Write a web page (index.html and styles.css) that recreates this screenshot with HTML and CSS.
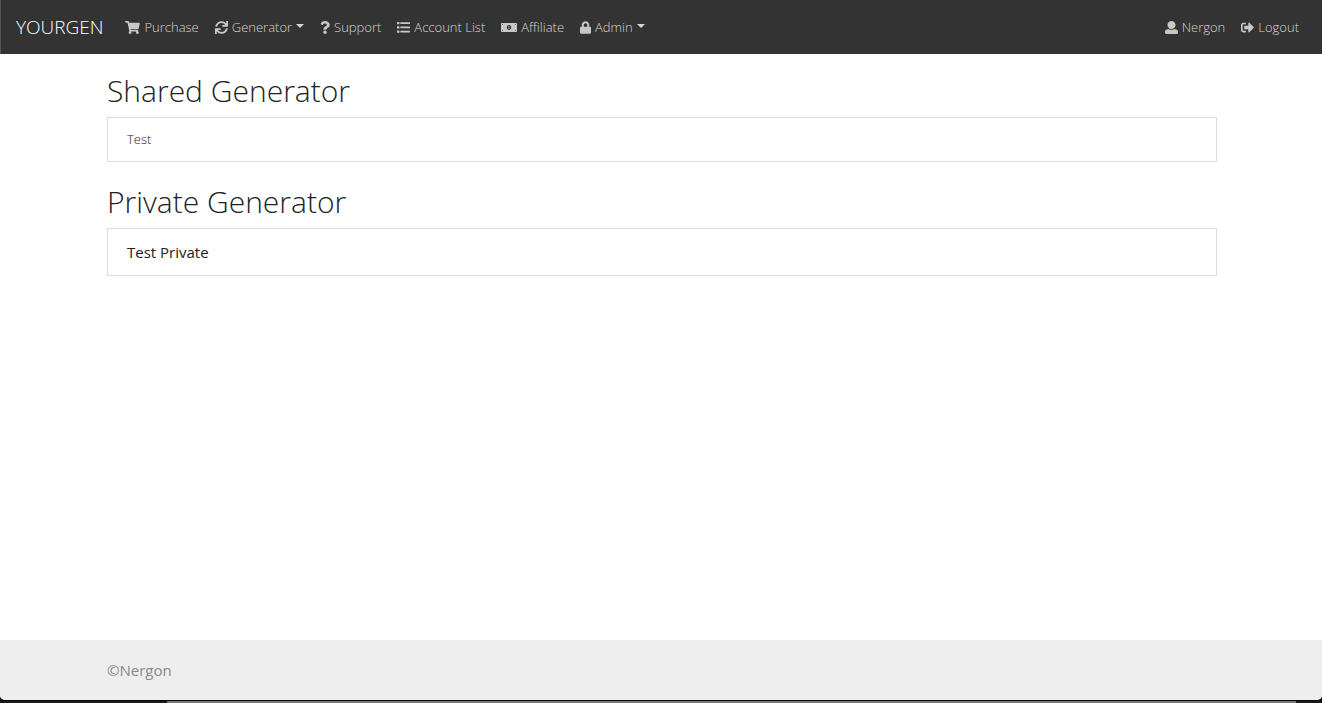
FILE: index.html
```html
<!DOCTYPE html>
<html lang="en">
<head>
    <meta charset="UTF-8">
    <meta name="viewport" content="width=device-width, initial-scale=1.0">
    <title>YOURGEN</title>
    <link rel="stylesheet" href="styles.css">
</head>
<body>
    <div class="window">
        <nav class="navbar">
            <a class="navbar-brand" href="#">YOURGEN</a>
            <ul class="nav">
                <li><a class="nav-link" href="#">
                    <svg class="icon icon-wide" viewBox="0 0 576 512" aria-hidden="true"><path d="M528.12 301.319l47.273-208C578.806 78.301 567.391 64 551.99 64H159.208l-9.166-44.81C147.758 8.021 137.93 0 126.529 0H24C10.745 0 0 10.745 0 24v16c0 13.255 10.745 24 24 24h69.883l70.248 343.435C147.325 417.1 136 435.222 136 456c0 30.928 25.072 56 56 56s56-25.072 56-56c0-15.674-6.447-29.835-16.824-40h209.647C430.447 426.165 424 440.326 424 456c0 30.928 25.072 56 56 56s56-25.072 56-56c0-22.172-12.888-41.332-31.579-50.405l5.517-24.276c3.413-15.018-8.002-29.319-23.403-29.319H218.117l-6.545-32h293.145c11.206 0 20.92-7.754 23.403-18.681z"/></svg>
                    Purchase
                </a></li>
                <li><a class="nav-link dropdown-toggle" href="#">
                    <svg class="icon" viewBox="0 0 512 512" aria-hidden="true"><path d="M440.65 12.57l4 82.77A247.16 247.16 0 0 0 255.83 8C134.73 8 33.91 94.92 12.29 209.82A12 12 0 0 0 24.09 224h49.05a12 12 0 0 0 11.67-9.26 175.91 175.91 0 0 1 317-56.94l-101.46-4.86a12 12 0 0 0-12.57 12v47.41a12 12 0 0 0 12 12H500a12 12 0 0 0 12-12V12a12 12 0 0 0-12-12h-47.37a12 12 0 0 0-11.98 12.57zM255.83 432a175.61 175.61 0 0 1-146-77.8l101.8 4.87a12 12 0 0 0 12.57-12v-47.4a12 12 0 0 0-12-12H12a12 12 0 0 0-12 12V500a12 12 0 0 0 12 12h47.35a12 12 0 0 0 12-12.6l-4.15-82.57A247.17 247.17 0 0 0 255.83 504c121.11 0 221.93-86.92 243.55-201.82a12 12 0 0 0-11.8-14.18h-49.05a12 12 0 0 0-11.67 9.26A175.86 175.86 0 0 1 255.83 432z"/></svg>
                    Generator
                </a></li>
                <li><a class="nav-link" href="#">
                    <svg class="icon icon-narrow" viewBox="0 0 384 512" aria-hidden="true"><path d="M202.021 0C122.202 0 70.503 32.703 29.914 91.026c-7.363 10.58-5.093 25.086 5.178 32.874l43.138 32.709c10.373 7.865 25.132 6.026 33.253-4.148 25.049-31.381 43.63-49.449 82.757-49.449 30.764 0 68.816 19.799 68.816 49.631 0 22.552-18.617 34.134-48.993 51.164-35.423 19.86-82.299 44.576-82.299 106.405V320c0 13.255 10.745 24 24 24h72.471c13.255 0 24-10.745 24-24v-5.773c0-42.86 125.268-44.645 125.268-160.627C377.504 66.256 286.902 0 202.021 0zM192 373.459c-38.196 0-69.271 31.075-69.271 69.271 0 38.195 31.075 69.27 69.271 69.27s69.271-31.075 69.271-69.271-31.075-69.27-69.271-69.27z"/></svg>
                    Support
                </a></li>
                <li><a class="nav-link" href="#">
                    <svg class="icon" viewBox="0 0 512 512" aria-hidden="true"><path d="M12 40h72q12 0 12 12v64q0 12-12 12H12q-12 0-12-12V52q0-12 12-12zM12 208h72q12 0 12 12v64q0 12-12 12H12q-12 0-12-12v-64q0-12 12-12zM12 376h72q12 0 12 12v64q0 12-12 12H12q-12 0-12-12v-64q0-12 12-12zM144 48h352q16 0 16 16v40q0 16-16 16H144q-16 0-16-16V64q0-16 16-16zM144 216h352q16 0 16 16v40q0 16-16 16H144q-16 0-16-16v-40q0-16 16-16zM144 384h352q16 0 16 16v40q0 16-16 16H144q-16 0-16-16v-40q0-16 16-16z"/></svg>
                    Account List
                </a></li>
                <li><a class="nav-link" href="#">
                    <svg class="icon icon-bill" viewBox="0 0 640 512" aria-hidden="true"><path fill-rule="evenodd" d="M24 80h592q24 0 24 24v304q0 24-24 24H24q-24 0-24-24V104q0-24 24-24zM40 120v36q32-4 36-36zM564 120q4 32 36 36v-36zM40 356v36h36q-4-32-36-36zM600 356q-32 4-36 36h36zM320 160c-52 0-88 43-88 96s36 96 88 96 88-43 88-96-36-96-88-96z"/><path d="M302 202h32v84h18v24h-64v-24h18v-50h-18v-24z"/></svg>
                    Affiliate
                </a></li>
                <li><a class="nav-link dropdown-toggle" href="#">
                    <svg class="icon icon-lock" viewBox="0 0 448 512" aria-hidden="true"><path d="M400 224h-24v-72C376 68.2 307.8 0 224 0S72 68.2 72 152v72H48c-26.5 0-48 21.5-48 48v192c0 26.5 21.5 48 48 48h352c26.5 0 48-21.5 48-48V272c0-26.5-21.5-48-48-48zm-104 0H152v-72c0-39.7 32.3-72 72-72s72 32.3 72 72v72z"/></svg>
                    Admin
                </a></li>
            </ul>
            <ul class="nav nav-right">
                <li><a class="nav-link" href="#">
                    <svg class="icon" viewBox="0 0 512 512" aria-hidden="true"><path d="M256 0c88.366 0 160 71.634 160 160s-71.634 160-160 160S96 248.366 96 160 167.634 0 256 0zm183.283 333.821l-71.313-17.828c-74.923 53.89-165.738 41.864-223.94 0l-71.313 17.828C29.981 344.505 0 382.903 0 426.955V464c0 26.51 21.49 48 48 48h416c26.51 0 48-21.49 48-48v-37.045c0-44.052-29.981-82.45-72.717-93.134z"/></svg>
                    Nergon
                </a></li>
                <li><a class="nav-link" href="#">
                    <svg class="icon" viewBox="0 0 512 512" aria-hidden="true"><path d="M497 273L329 441c-15 15-41 4.5-41-17v-96H152c-13.3 0-24-10.7-24-24v-96c0-13.3 10.7-24 24-24h136V88c0-21.4 25.9-32 41-17l168 168c9.3 9.4 9.3 24.6 0 34zM192 436v-40c0-6.6-5.4-12-12-12H96c-17.7 0-32-14.3-32-32V160c0-17.7 14.3-32 32-32h84c6.6 0 12-5.4 12-12V76c0-6.6-5.4-12-12-12H96c-53 0-96 43-96 96v192c0 53 43 96 96 96h84c6.6 0 12-5.4 12-12z"/></svg>
                    Logout
                </a></li>
            </ul>
        </nav>

        <main class="container content">
            <h2>Shared Generator</h2>
            <div class="list-group">
                <a class="list-item" href="#">Test</a>
            </div>

            <h2>Private Generator</h2>
            <div class="list-group">
                <a class="list-item list-item-private" href="#">Test Private</a>
            </div>
        </main>

        <footer class="footer">
            <div class="container">©Nergon</div>
        </footer>
    </div>
    <div class="desktop-edge"></div>
</body>
</html>
```
FILE: styles.css
```css
* {
    box-sizing: border-box;
}

body {
    margin: 0;
    background: #08080f;
    min-height: 100vh;
    display: flex;
    flex-direction: column;
    font-family: "Open Sans", sans-serif;
    font-size: 15px;
    font-weight: 300;
    line-height: 1.5;
    color: #222;
}

.window {
    flex: 1;
    display: flex;
    flex-direction: column;
    background: #fff;
    border-radius: 0 0 5px 5px;
    overflow: hidden;
}

.navbar {
    display: flex;
    align-items: center;
    min-height: 54px;
    padding: 0 15px;
    background: #333;
    border-left: 1px solid #555;
}

.navbar-brand {
    margin-right: 14px;
    font-size: 19px;
    color: #fff;
    text-decoration: none;
}

.nav {
    display: flex;
    margin: 0;
    padding: 0;
    list-style: none;
}

.nav-right {
    margin-left: auto;
}

.nav-link {
    display: flex;
    align-items: center;
    gap: 4px;
    padding: 8px;
    font-size: 13px;
    line-height: 20px;
    color: #d6d6d6;
    text-decoration: none;
    white-space: nowrap;
}

.nav-link:hover {
    color: #fff;
}

.dropdown-toggle::after {
    content: "";
    margin-bottom: 2px;
    border-top: 4px solid;
    border-right: 4px solid transparent;
    border-left: 4px solid transparent;
}

.icon {
    width: 13px;
    height: 13px;
    fill: #c8c8c8;
}

.icon-wide {
    width: 15px;
}

.icon-narrow {
    width: 10px;
}

.icon-bill {
    width: 16px;
}

.icon-lock {
    width: 11px;
}

.container {
    width: 100%;
    max-width: 1140px;
    margin: 0 auto;
    padding: 0 14px 0 16px;
}

.content {
    flex: 1;
    padding-top: 19px;
}

h2 {
    margin: 0 0 8px;
    font-size: 30px;
    font-weight: 300;
    line-height: 36px;
}

.list-group {
    margin-bottom: 22px;
    border: 1px solid #ddd;
}

.list-item {
    display: block;
    padding: 12px 19px;
    font-size: 13px;
    line-height: 19px;
    color: #222;
    text-decoration: none;
}

.list-item-private {
    font-size: 15px;
    font-weight: 400;
    line-height: 22px;
}

.footer {
    padding: 20px 0;
    background: #eee;
    font-weight: 400;
    line-height: 20px;
    color: #888;
}

/* strip of desktop visible under the window */
.desktop-edge {
    height: 3px;
    background: linear-gradient(to right, #1c181a 167px, #777 167px, #777 calc(100% - 26px), #1c181a calc(100% - 26px));
    border-top: 1px solid #08080f;
}
```
